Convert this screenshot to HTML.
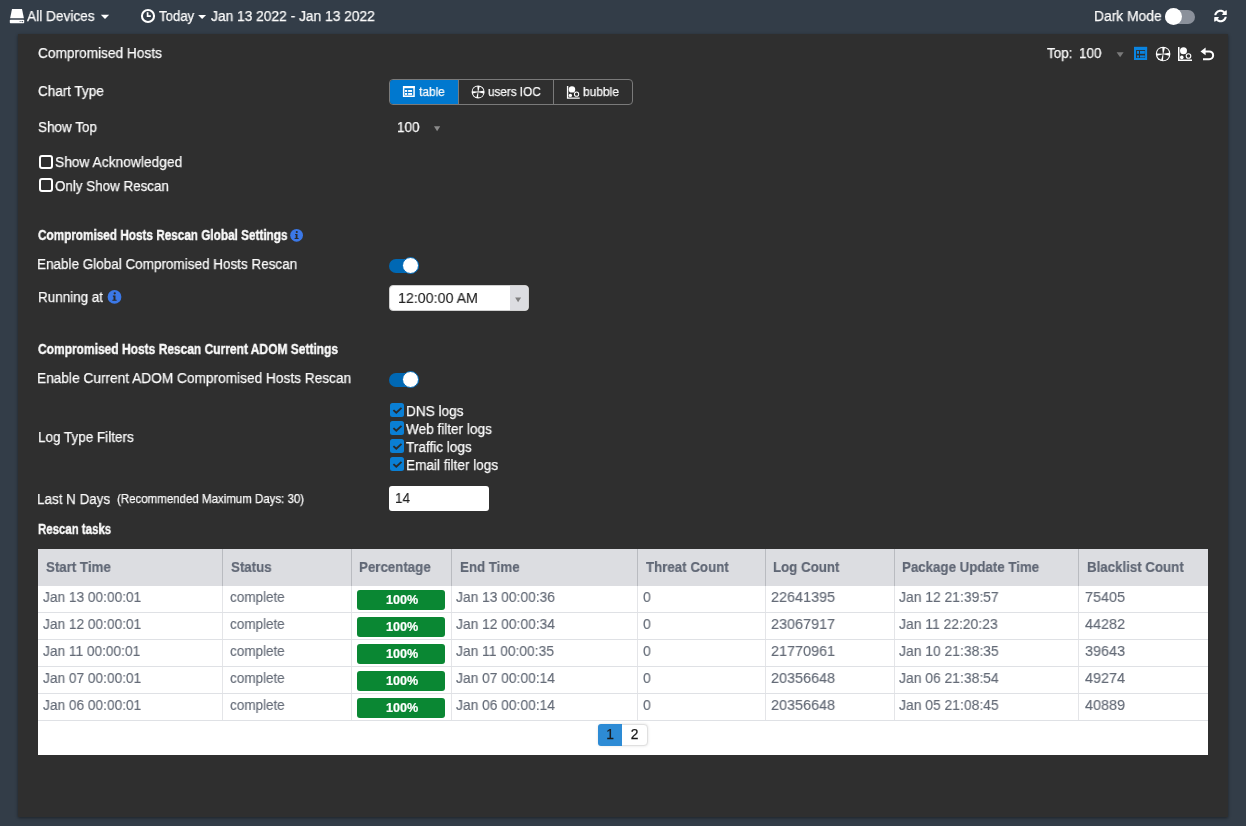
<!DOCTYPE html>
<html><head><meta charset="utf-8"><style>
html,body{margin:0;padding:0;width:1246px;height:826px;overflow:hidden;background:#333d48;font-family:"Liberation Sans",sans-serif;}
.t{position:absolute;white-space:nowrap;line-height:1;will-change:transform;}
</style></head><body>
<div style="position:absolute;left:18px;top:34px;width:1210px;height:783px;background:#2f2f2f;box-shadow:0 1px 3px rgba(0,0,0,.45);"></div>
<div class="t" style="left:27.3px;top:9.25px;font-size:14.826px;font-weight:400;color:#fafafa;letter-spacing:0px;transform:scaleX(0.9241);transform-origin:0 0;-webkit-text-stroke:0.25px #fafafa;">All Devices</div>
<div class="t" style="left:159px;top:9.25px;font-size:14.826px;font-weight:400;color:#fafafa;letter-spacing:0px;transform:scaleX(0.8904);transform-origin:0 0;-webkit-text-stroke:0.25px #fafafa;">Today</div>
<div class="t" style="left:211px;top:9.25px;font-size:14.826px;font-weight:400;color:#fafafa;letter-spacing:0px;transform:scaleX(0.9295);transform-origin:0 0;-webkit-text-stroke:0.25px #fafafa;">Jan 13 2022 - Jan 13 2022</div>
<div class="t" style="left:1093.7px;top:9.25px;font-size:14.826px;font-weight:400;color:#fafafa;letter-spacing:0px;transform:scaleX(0.9335);transform-origin:0 0;-webkit-text-stroke:0.25px #fafafa;">Dark Mode</div>
<div class="t" style="left:38px;top:45.85px;font-size:14.826px;font-weight:400;color:#fafafa;letter-spacing:0px;transform:scaleX(0.9234);transform-origin:0 0;-webkit-text-stroke:0.25px #fafafa;">Compromised Hosts</div>
<div class="t" style="left:1046.5px;top:46.25px;font-size:14.826px;font-weight:400;color:#fafafa;letter-spacing:0px;transform:scaleX(0.9038);transform-origin:0 0;-webkit-text-stroke:0.25px #fafafa;">Top:</div>
<div class="t" style="left:1079.3px;top:46.25px;font-size:14.826px;font-weight:400;color:#fafafa;letter-spacing:0px;transform:scaleX(0.9072);transform-origin:0 0;-webkit-text-stroke:0.25px #fafafa;">100</div>
<div class="t" style="left:38px;top:84.05px;font-size:14.826px;font-weight:400;color:#fafafa;letter-spacing:0px;transform:scaleX(0.9106);transform-origin:0 0;-webkit-text-stroke:0.25px #fafafa;">Chart Type</div>
<div class="t" style="left:38px;top:120.05px;font-size:14.826px;font-weight:400;color:#fafafa;letter-spacing:0px;transform:scaleX(0.9106);transform-origin:0 0;-webkit-text-stroke:0.25px #fafafa;">Show Top</div>
<div class="t" style="left:396.8px;top:120.25px;font-size:14.826px;font-weight:400;color:#fafafa;letter-spacing:0px;transform:scaleX(0.9106);transform-origin:0 0;-webkit-text-stroke:0.25px #fafafa;">100</div>
<div class="t" style="left:55.2px;top:155.05px;font-size:14.826px;font-weight:400;color:#fafafa;letter-spacing:0px;transform:scaleX(0.9308);transform-origin:0 0;-webkit-text-stroke:0.25px #fafafa;">Show Acknowledged</div>
<div class="t" style="left:55.2px;top:178.75px;font-size:14.826px;font-weight:400;color:#fafafa;letter-spacing:0px;transform:scaleX(0.9038);transform-origin:0 0;-webkit-text-stroke:0.25px #fafafa;">Only Show Rescan</div>
<div class="t" style="left:38px;top:228.04px;font-size:14.244px;font-weight:700;color:#fafafa;letter-spacing:0px;transform:scaleX(0.8256);transform-origin:0 0;-webkit-text-stroke:0.4px #fafafa;">Compromised Hosts Rescan Global Settings</div>
<div class="t" style="left:37.3px;top:257.45px;font-size:14.826px;font-weight:400;color:#fafafa;letter-spacing:0px;transform:scaleX(0.9106);transform-origin:0 0;-webkit-text-stroke:0.25px #fafafa;">Enable Global Compromised Hosts Rescan</div>
<div class="t" style="left:37.9px;top:289.85px;font-size:14.826px;font-weight:400;color:#fafafa;letter-spacing:0px;transform:scaleX(0.9072);transform-origin:0 0;-webkit-text-stroke:0.25px #fafafa;">Running at</div>
<div class="t" style="left:38px;top:341.94px;font-size:14.244px;font-weight:700;color:#fafafa;letter-spacing:0px;transform:scaleX(0.8424);transform-origin:0 0;-webkit-text-stroke:0.4px #fafafa;">Compromised Hosts Rescan Current ADOM Settings</div>
<div class="t" style="left:37.3px;top:371.25px;font-size:14.826px;font-weight:400;color:#fafafa;letter-spacing:0px;transform:scaleX(0.9241);transform-origin:0 0;-webkit-text-stroke:0.25px #fafafa;">Enable Current ADOM Compromised Hosts Rescan</div>
<div class="t" style="left:38px;top:430.25px;font-size:14.826px;font-weight:400;color:#fafafa;letter-spacing:0px;transform:scaleX(0.9106);transform-origin:0 0;-webkit-text-stroke:0.25px #fafafa;">Log Type Filters</div>
<div class="t" style="left:405.8px;top:403.95px;font-size:14.826px;font-weight:400;color:#fafafa;letter-spacing:0px;transform:scaleX(0.9173);transform-origin:0 0;-webkit-text-stroke:0.25px #fafafa;">DNS logs</div>
<div class="t" style="left:405.8px;top:421.95px;font-size:14.826px;font-weight:400;color:#fafafa;letter-spacing:0px;transform:scaleX(0.9173);transform-origin:0 0;-webkit-text-stroke:0.25px #fafafa;">Web filter logs</div>
<div class="t" style="left:405.8px;top:439.95px;font-size:14.826px;font-weight:400;color:#fafafa;letter-spacing:0px;transform:scaleX(0.9173);transform-origin:0 0;-webkit-text-stroke:0.25px #fafafa;">Traffic logs</div>
<div class="t" style="left:405.8px;top:457.95px;font-size:14.826px;font-weight:400;color:#fafafa;letter-spacing:0px;transform:scaleX(0.9173);transform-origin:0 0;-webkit-text-stroke:0.25px #fafafa;">Email filter logs</div>
<div class="t" style="left:37.2px;top:491.65px;font-size:14.826px;font-weight:400;color:#fafafa;letter-spacing:0px;transform:scaleX(0.9072);transform-origin:0 0;-webkit-text-stroke:0.25px #fafafa;">Last N Days</div>
<div class="t" style="left:117.3px;top:492.97px;font-size:12.791px;font-weight:400;color:#fafafa;letter-spacing:0px;transform:scaleX(0.8991);transform-origin:0 0;-webkit-text-stroke:0.25px #fafafa;">(Recommended Maximum Days: 30)</div>
<div class="t" style="left:38px;top:522.44px;font-size:14.244px;font-weight:700;color:#fafafa;letter-spacing:0px;transform:scaleX(0.8038);transform-origin:0 0;-webkit-text-stroke:0.4px #fafafa;">Rescan tasks</div>
<div style="position:absolute;left:38px;top:549px;width:1170px;height:206px;background:#fff;"></div>
<div style="position:absolute;left:38px;top:549px;width:1170px;height:36.5px;background:#dcdde1;"></div>
<div class="t" style="left:46px;top:560.25px;font-size:14.826px;font-weight:700;color:#606775;letter-spacing:0px;transform:scaleX(0.8971);transform-origin:0 0;-webkit-text-stroke:0.2px #606775;">Start Time</div>
<div class="t" style="left:231.0px;top:560.25px;font-size:14.826px;font-weight:700;color:#606775;letter-spacing:0px;transform:scaleX(0.8971);transform-origin:0 0;-webkit-text-stroke:0.2px #606775;">Status</div>
<div class="t" style="left:358.5px;top:560.25px;font-size:14.826px;font-weight:700;color:#606775;letter-spacing:0px;transform:scaleX(0.8971);transform-origin:0 0;-webkit-text-stroke:0.2px #606775;">Percentage</div>
<div class="t" style="left:459.8px;top:560.25px;font-size:14.826px;font-weight:700;color:#606775;letter-spacing:0px;transform:scaleX(0.8971);transform-origin:0 0;-webkit-text-stroke:0.2px #606775;">End Time</div>
<div class="t" style="left:646.0px;top:560.25px;font-size:14.826px;font-weight:700;color:#606775;letter-spacing:0px;transform:scaleX(0.8971);transform-origin:0 0;-webkit-text-stroke:0.2px #606775;">Threat Count</div>
<div class="t" style="left:773px;top:560.25px;font-size:14.826px;font-weight:700;color:#606775;letter-spacing:0px;transform:scaleX(0.8971);transform-origin:0 0;-webkit-text-stroke:0.2px #606775;">Log Count</div>
<div class="t" style="left:902px;top:560.25px;font-size:14.826px;font-weight:700;color:#606775;letter-spacing:0px;transform:scaleX(0.8971);transform-origin:0 0;-webkit-text-stroke:0.2px #606775;">Package Update Time</div>
<div class="t" style="left:1087.1px;top:560.25px;font-size:14.826px;font-weight:700;color:#606775;letter-spacing:0px;transform:scaleX(0.8971);transform-origin:0 0;-webkit-text-stroke:0.2px #606775;">Blacklist Count</div>
<div style="position:absolute;left:222.0px;top:549px;width:1px;height:36.5px;background:#b9bbc0;"></div>
<div style="position:absolute;left:222.0px;top:585.5px;width:1px;height:134.5px;background:#e4e5e8;"></div>
<div style="position:absolute;left:350.5px;top:549px;width:1px;height:36.5px;background:#b9bbc0;"></div>
<div style="position:absolute;left:350.5px;top:585.5px;width:1px;height:134.5px;background:#e4e5e8;"></div>
<div style="position:absolute;left:450.5px;top:549px;width:1px;height:36.5px;background:#b9bbc0;"></div>
<div style="position:absolute;left:450.5px;top:585.5px;width:1px;height:134.5px;background:#e4e5e8;"></div>
<div style="position:absolute;left:636.5px;top:549px;width:1px;height:36.5px;background:#b9bbc0;"></div>
<div style="position:absolute;left:636.5px;top:585.5px;width:1px;height:134.5px;background:#e4e5e8;"></div>
<div style="position:absolute;left:764.5px;top:549px;width:1px;height:36.5px;background:#b9bbc0;"></div>
<div style="position:absolute;left:764.5px;top:585.5px;width:1px;height:134.5px;background:#e4e5e8;"></div>
<div style="position:absolute;left:893.5px;top:549px;width:1px;height:36.5px;background:#b9bbc0;"></div>
<div style="position:absolute;left:893.5px;top:585.5px;width:1px;height:134.5px;background:#e4e5e8;"></div>
<div style="position:absolute;left:1077.5px;top:549px;width:1px;height:36.5px;background:#b9bbc0;"></div>
<div style="position:absolute;left:1077.5px;top:585.5px;width:1px;height:134.5px;background:#e4e5e8;"></div>
<div style="position:absolute;left:38px;top:612px;width:1170px;height:1px;background:#dfe1e5;"></div>
<div class="t" style="left:43px;top:590.25px;font-size:14.826px;font-weight:400;color:#646b77;letter-spacing:0px;transform:scaleX(0.9241);transform-origin:0 0;-webkit-text-stroke:0.15px #646b77;">Jan 13 00:00:01</div>
<div class="t" style="left:229.9px;top:590.25px;font-size:14.826px;font-weight:400;color:#646b77;letter-spacing:0px;transform:scaleX(0.9106);transform-origin:0 0;-webkit-text-stroke:0.15px #646b77;">complete</div>
<div style="position:absolute;left:357px;top:590px;width:88px;height:20px;background:#0a8733;border-radius:3px;"></div>
<div class="t" style="left:385.6px;top:594.02px;font-size:12.500px;font-weight:700;color:#fff;letter-spacing:0px;transform:scaleX(1.0080);transform-origin:0 0;-webkit-text-stroke:0.2px #fff;">100%</div>
<div class="t" style="left:456.3px;top:590.25px;font-size:14.826px;font-weight:400;color:#646b77;letter-spacing:0px;transform:scaleX(0.9308);transform-origin:0 0;-webkit-text-stroke:0.15px #646b77;">Jan 13 00:00:36</div>
<div class="t" style="left:643px;top:590.25px;font-size:14.826px;font-weight:400;color:#646b77;letter-spacing:0px;transform:scaleX(0.9443);transform-origin:0 0;-webkit-text-stroke:0.15px #646b77;">0</div>
<div class="t" style="left:770.8px;top:590.25px;font-size:14.826px;font-weight:400;color:#646b77;letter-spacing:0px;transform:scaleX(0.9713);transform-origin:0 0;-webkit-text-stroke:0.15px #646b77;">22641395</div>
<div class="t" style="left:898.5px;top:590.25px;font-size:14.826px;font-weight:400;color:#646b77;letter-spacing:0px;transform:scaleX(0.9376);transform-origin:0 0;-webkit-text-stroke:0.15px #646b77;">Jan 12 21:39:57</div>
<div class="t" style="left:1085.4px;top:590.25px;font-size:14.826px;font-weight:400;color:#646b77;letter-spacing:0px;transform:scaleX(0.9713);transform-origin:0 0;-webkit-text-stroke:0.15px #646b77;">75405</div>
<div style="position:absolute;left:38px;top:639px;width:1170px;height:1px;background:#dfe1e5;"></div>
<div class="t" style="left:43px;top:617.25px;font-size:14.826px;font-weight:400;color:#646b77;letter-spacing:0px;transform:scaleX(0.9241);transform-origin:0 0;-webkit-text-stroke:0.15px #646b77;">Jan 12 00:00:01</div>
<div class="t" style="left:229.9px;top:617.25px;font-size:14.826px;font-weight:400;color:#646b77;letter-spacing:0px;transform:scaleX(0.9106);transform-origin:0 0;-webkit-text-stroke:0.15px #646b77;">complete</div>
<div style="position:absolute;left:357px;top:617px;width:88px;height:20px;background:#0a8733;border-radius:3px;"></div>
<div class="t" style="left:385.6px;top:621.02px;font-size:12.500px;font-weight:700;color:#fff;letter-spacing:0px;transform:scaleX(1.0080);transform-origin:0 0;-webkit-text-stroke:0.2px #fff;">100%</div>
<div class="t" style="left:456.3px;top:617.25px;font-size:14.826px;font-weight:400;color:#646b77;letter-spacing:0px;transform:scaleX(0.9308);transform-origin:0 0;-webkit-text-stroke:0.15px #646b77;">Jan 12 00:00:34</div>
<div class="t" style="left:643px;top:617.25px;font-size:14.826px;font-weight:400;color:#646b77;letter-spacing:0px;transform:scaleX(0.9443);transform-origin:0 0;-webkit-text-stroke:0.15px #646b77;">0</div>
<div class="t" style="left:770.8px;top:617.25px;font-size:14.826px;font-weight:400;color:#646b77;letter-spacing:0px;transform:scaleX(0.9713);transform-origin:0 0;-webkit-text-stroke:0.15px #646b77;">23067917</div>
<div class="t" style="left:898.5px;top:617.25px;font-size:14.826px;font-weight:400;color:#646b77;letter-spacing:0px;transform:scaleX(0.9376);transform-origin:0 0;-webkit-text-stroke:0.15px #646b77;">Jan 11 22:20:23</div>
<div class="t" style="left:1085.4px;top:617.25px;font-size:14.826px;font-weight:400;color:#646b77;letter-spacing:0px;transform:scaleX(0.9713);transform-origin:0 0;-webkit-text-stroke:0.15px #646b77;">44282</div>
<div style="position:absolute;left:38px;top:666px;width:1170px;height:1px;background:#dfe1e5;"></div>
<div class="t" style="left:43px;top:644.25px;font-size:14.826px;font-weight:400;color:#646b77;letter-spacing:0px;transform:scaleX(0.9241);transform-origin:0 0;-webkit-text-stroke:0.15px #646b77;">Jan 11 00:00:01</div>
<div class="t" style="left:229.9px;top:644.25px;font-size:14.826px;font-weight:400;color:#646b77;letter-spacing:0px;transform:scaleX(0.9106);transform-origin:0 0;-webkit-text-stroke:0.15px #646b77;">complete</div>
<div style="position:absolute;left:357px;top:644px;width:88px;height:20px;background:#0a8733;border-radius:3px;"></div>
<div class="t" style="left:385.6px;top:648.02px;font-size:12.500px;font-weight:700;color:#fff;letter-spacing:0px;transform:scaleX(1.0080);transform-origin:0 0;-webkit-text-stroke:0.2px #fff;">100%</div>
<div class="t" style="left:456.3px;top:644.25px;font-size:14.826px;font-weight:400;color:#646b77;letter-spacing:0px;transform:scaleX(0.9308);transform-origin:0 0;-webkit-text-stroke:0.15px #646b77;">Jan 11 00:00:35</div>
<div class="t" style="left:643px;top:644.25px;font-size:14.826px;font-weight:400;color:#646b77;letter-spacing:0px;transform:scaleX(0.9443);transform-origin:0 0;-webkit-text-stroke:0.15px #646b77;">0</div>
<div class="t" style="left:770.8px;top:644.25px;font-size:14.826px;font-weight:400;color:#646b77;letter-spacing:0px;transform:scaleX(0.9713);transform-origin:0 0;-webkit-text-stroke:0.15px #646b77;">21770961</div>
<div class="t" style="left:898.5px;top:644.25px;font-size:14.826px;font-weight:400;color:#646b77;letter-spacing:0px;transform:scaleX(0.9376);transform-origin:0 0;-webkit-text-stroke:0.15px #646b77;">Jan 10 21:38:35</div>
<div class="t" style="left:1085.4px;top:644.25px;font-size:14.826px;font-weight:400;color:#646b77;letter-spacing:0px;transform:scaleX(0.9713);transform-origin:0 0;-webkit-text-stroke:0.15px #646b77;">39643</div>
<div style="position:absolute;left:38px;top:693px;width:1170px;height:1px;background:#dfe1e5;"></div>
<div class="t" style="left:43px;top:671.25px;font-size:14.826px;font-weight:400;color:#646b77;letter-spacing:0px;transform:scaleX(0.9241);transform-origin:0 0;-webkit-text-stroke:0.15px #646b77;">Jan 07 00:00:01</div>
<div class="t" style="left:229.9px;top:671.25px;font-size:14.826px;font-weight:400;color:#646b77;letter-spacing:0px;transform:scaleX(0.9106);transform-origin:0 0;-webkit-text-stroke:0.15px #646b77;">complete</div>
<div style="position:absolute;left:357px;top:671px;width:88px;height:20px;background:#0a8733;border-radius:3px;"></div>
<div class="t" style="left:385.6px;top:675.02px;font-size:12.500px;font-weight:700;color:#fff;letter-spacing:0px;transform:scaleX(1.0080);transform-origin:0 0;-webkit-text-stroke:0.2px #fff;">100%</div>
<div class="t" style="left:456.3px;top:671.25px;font-size:14.826px;font-weight:400;color:#646b77;letter-spacing:0px;transform:scaleX(0.9308);transform-origin:0 0;-webkit-text-stroke:0.15px #646b77;">Jan 07 00:00:14</div>
<div class="t" style="left:643px;top:671.25px;font-size:14.826px;font-weight:400;color:#646b77;letter-spacing:0px;transform:scaleX(0.9443);transform-origin:0 0;-webkit-text-stroke:0.15px #646b77;">0</div>
<div class="t" style="left:770.8px;top:671.25px;font-size:14.826px;font-weight:400;color:#646b77;letter-spacing:0px;transform:scaleX(0.9713);transform-origin:0 0;-webkit-text-stroke:0.15px #646b77;">20356648</div>
<div class="t" style="left:898.5px;top:671.25px;font-size:14.826px;font-weight:400;color:#646b77;letter-spacing:0px;transform:scaleX(0.9376);transform-origin:0 0;-webkit-text-stroke:0.15px #646b77;">Jan 06 21:38:54</div>
<div class="t" style="left:1085.4px;top:671.25px;font-size:14.826px;font-weight:400;color:#646b77;letter-spacing:0px;transform:scaleX(0.9713);transform-origin:0 0;-webkit-text-stroke:0.15px #646b77;">49274</div>
<div style="position:absolute;left:38px;top:720px;width:1170px;height:1px;background:#dfe1e5;"></div>
<div class="t" style="left:43px;top:698.25px;font-size:14.826px;font-weight:400;color:#646b77;letter-spacing:0px;transform:scaleX(0.9241);transform-origin:0 0;-webkit-text-stroke:0.15px #646b77;">Jan 06 00:00:01</div>
<div class="t" style="left:229.9px;top:698.25px;font-size:14.826px;font-weight:400;color:#646b77;letter-spacing:0px;transform:scaleX(0.9106);transform-origin:0 0;-webkit-text-stroke:0.15px #646b77;">complete</div>
<div style="position:absolute;left:357px;top:698px;width:88px;height:20px;background:#0a8733;border-radius:3px;"></div>
<div class="t" style="left:385.6px;top:702.02px;font-size:12.500px;font-weight:700;color:#fff;letter-spacing:0px;transform:scaleX(1.0080);transform-origin:0 0;-webkit-text-stroke:0.2px #fff;">100%</div>
<div class="t" style="left:456.3px;top:698.25px;font-size:14.826px;font-weight:400;color:#646b77;letter-spacing:0px;transform:scaleX(0.9308);transform-origin:0 0;-webkit-text-stroke:0.15px #646b77;">Jan 06 00:00:14</div>
<div class="t" style="left:643px;top:698.25px;font-size:14.826px;font-weight:400;color:#646b77;letter-spacing:0px;transform:scaleX(0.9443);transform-origin:0 0;-webkit-text-stroke:0.15px #646b77;">0</div>
<div class="t" style="left:770.8px;top:698.25px;font-size:14.826px;font-weight:400;color:#646b77;letter-spacing:0px;transform:scaleX(0.9713);transform-origin:0 0;-webkit-text-stroke:0.15px #646b77;">20356648</div>
<div class="t" style="left:898.5px;top:698.25px;font-size:14.826px;font-weight:400;color:#646b77;letter-spacing:0px;transform:scaleX(0.9376);transform-origin:0 0;-webkit-text-stroke:0.15px #646b77;">Jan 05 21:08:45</div>
<div class="t" style="left:1085.4px;top:698.25px;font-size:14.826px;font-weight:400;color:#646b77;letter-spacing:0px;transform:scaleX(0.9713);transform-origin:0 0;-webkit-text-stroke:0.15px #646b77;">40889</div>
<div style="position:absolute;left:598px;top:723.5px;width:49.5px;height:22.6px;background:#fff;border:1px solid #e0e0e0;border-radius:4px;box-sizing:border-box;box-shadow:0 0 3px rgba(0,0,0,.12);"></div>
<div style="position:absolute;left:598px;top:723.5px;width:24px;height:22.6px;background:#2d8bd5;border-radius:3px 0 0 3px;"></div>
<div class="t" style="left:598.3px;top:728.12px;font-size:13.800px;font-weight:400;color:#1a1a1a;letter-spacing:0px;-webkit-text-stroke:0.25px #1a1a1a;width:24px;text-align:center;">1</div>
<div class="t" style="left:622px;top:728.12px;font-size:13.800px;font-weight:400;color:#1a1a1a;letter-spacing:0px;-webkit-text-stroke:0.25px #1a1a1a;width:25px;text-align:center;">2</div>
<svg style="position:absolute;left:0px;top:0px;overflow:visible" width="40" height="34" viewBox="0 0 40 34"><path d="M12 9 H22 L23.9 18.2 H10.1 Z" fill="#fff"/><rect x="9.8" y="19.8" width="14.4" height="3.4" rx="0.7" fill="#fff"/><rect x="19.5" y="21.1" width="2.2" height="0.9" fill="#8a9099"/><circle cx="22.6" cy="21.55" r="0.6" fill="#333d48"/></svg>
<svg style="position:absolute;left:95px;top:8px;overflow:visible" width="16" height="16" viewBox="95 8 16 16"><path d="M100.8 14.8 L109.2 14.8 L105.0 19.1 Z" fill="#fff"/></svg>
<svg style="position:absolute;left:135px;top:4px;overflow:visible" width="24" height="24" viewBox="135 4 24 24"><circle cx="148" cy="16" r="6.05" fill="none" stroke="#fff" stroke-width="2.1"/><path d="M147.6 12.2 V16.2 H150.8" fill="none" stroke="#fff" stroke-width="1.7"/></svg>
<svg style="position:absolute;left:195px;top:8px;overflow:visible" width="16" height="16" viewBox="195 8 16 16"><path d="M198.1 14.9 L206.1 14.9 L202.1 19 Z" fill="#fff"/></svg>
<div style="position:absolute;left:1165px;top:10px;width:30px;height:14px;background:#8b919b;border-radius:7px;"></div>
<div style="position:absolute;left:1165px;top:8.2px;width:17px;height:17px;background:#fff;border-radius:50%;"></div>
<svg style="position:absolute;left:1214px;top:10px;overflow:visible" width="13" height="12" viewBox="1214 10 13 12"><g transform="translate(1214,9.5) scale(0.0254)"><path fill="#fff" d="M370.72 133.28C339.458 104.008 298.888 87.962 255.848 88c-77.458.068-144.328 53.178-162.791 126.85-1.344 5.363-6.122 9.15-11.651 9.15H24.103c-7.498 0-13.194-6.807-11.807-14.176C33.933 94.924 134.813 8 256 8c66.448 0 126.791 26.136 171.315 68.685L463.03 40.97C478.149 25.851 504 36.559 504 57.941V192c0 13.255-10.745 24-24 24H345.941c-21.382 0-32.090-25.851-16.971-40.971l41.75-41.749zM32 296h134.059c21.382 0 32.090 25.851 16.971 40.971l-41.750 41.750c31.262 29.273 71.835 45.319 114.876 45.280 77.418-.07 144.315-53.144 162.787-126.849 1.344-5.363 6.122-9.150 11.651-9.150h57.304c7.498 0 13.194 6.807 11.807 14.176C478.067 417.076 377.187 504 256 504c-66.448 0-126.791-26.136-171.315-68.685L48.970 471.030C33.851 486.149 8 475.441 8 454.059V320c0-13.255 10.745-24 24-24z"/></g></svg>
<svg style="position:absolute;left:1112px;top:48px;overflow:visible" width="16" height="12" viewBox="1112 48 16 12"><path d="M1116.6 52.3 L1123.6 52.3 L1120.1 57.3 Z" fill="#7a7a7a"/></svg>
<svg style="position:absolute;left:1130px;top:44px;overflow:visible" width="20" height="20" viewBox="1130 44 20 20"><rect x="1135" y="47.9" width="11.1" height="11.1" fill="none" stroke="#0a84e0" stroke-width="2"/><rect x="1134" y="46.9" width="13.1" height="3.2" fill="#0a84e0"/><rect x="1136.9" y="51" width="2.1" height="2.8" fill="#0a84e0"/><rect x="1136.9" y="55.4" width="2.1" height="2.1" fill="#0a84e0"/><rect x="1140" y="51" width="4.8" height="2.8" fill="#0a84e0"/><rect x="1140" y="55.4" width="4.8" height="2.1" fill="#0a84e0"/></svg>
<svg style="position:absolute;left:1150px;top:44px;overflow:visible" width="24" height="20" viewBox="1150 44 24 20"><circle cx="1163.1" cy="54" r="7.3" fill="#fff"/><path d="M1162.77 53.68 L1157.00 53.38 A5.77 5.77 0 0 1 1162.26 47.93 Z" fill="#2f2f2f"/><path d="M1163.44 53.68 L1164.84 48.08 A5.77 5.77 0 0 1 1169.12 52.68 Z" fill="#2f2f2f"/><path d="M1163.38 54.37 L1169.00 55.67 A5.77 5.77 0 0 1 1163.08 60.13 Z" fill="#2f2f2f"/><path d="M1162.77 54.32 L1161.18 59.87 A5.77 5.77 0 0 1 1157.17 55.72 Z" fill="#2f2f2f"/></svg>
<svg style="position:absolute;left:1175px;top:44px;overflow:visible" width="20" height="20" viewBox="1175 44 20 20"><path d="M1178.75 47 V60.25 H1192" fill="none" stroke="#fff" stroke-width="1.5"/><circle cx="1183.5" cy="50.8" r="3.5" fill="#fff"/><circle cx="1181.8" cy="57.4" r="1.8" fill="#fff"/><circle cx="1188.5" cy="56" r="2.3" fill="none" stroke="#fff" stroke-width="1.1"/></svg>
<svg style="position:absolute;left:1198px;top:44px;overflow:visible" width="20" height="20" viewBox="1198 44 20 20"><path d="M1204.6 51.4 H1209.2 A3.95 3.95 0 0 1 1209.2 59.3 H1203" fill="none" stroke="#fff" stroke-width="2"/><path d="M1200.5 51.4 L1205.6 47.6 L1205.6 55.2 Z" fill="#fff"/></svg>
<div style="position:absolute;left:389px;top:79px;width:243.5px;height:25.5px;border:1px solid #7a7a7a;border-radius:4px;box-sizing:border-box;overflow:hidden;"><div style="position:absolute;left:0;top:0;width:68px;height:100%;background:#0078cf;"></div><div style="position:absolute;left:68px;top:0;width:1px;height:100%;background:#7a7a7a;"></div><div style="position:absolute;left:163px;top:0;width:1px;height:100%;background:#7a7a7a;"></div></div>
<svg style="position:absolute;left:400px;top:83px;overflow:visible" width="18" height="18" viewBox="400 83 18 18"><rect x="403.65" y="86.75" width="10.4" height="9.5" fill="none" stroke="#fff" stroke-width="1.5"/><rect x="403" y="86" width="11.8" height="2.2" fill="#fff"/><rect x="405" y="90" width="2.2" height="1.9" fill="#fff"/><rect x="405" y="93" width="2.2" height="1.9" fill="#fff"/><rect x="408.1" y="90" width="4" height="1.9" fill="#fff"/><rect x="408.1" y="93" width="4" height="1.9" fill="#fff"/></svg>
<div class="t" style="left:418.7px;top:85.42px;font-size:13.081px;font-weight:400;color:#fafafa;letter-spacing:0px;transform:scaleX(0.9097);transform-origin:0 0;-webkit-text-stroke:0.25px #fafafa;">table</div>
<svg style="position:absolute;left:468px;top:82px;overflow:visible" width="20" height="20" viewBox="468 82 20 20"><circle cx="478.1" cy="91.9" r="6.5" fill="#fff"/><path d="M477.80 91.61 L472.67 91.34 A5.14 5.14 0 0 1 477.36 86.49 Z" fill="#2f2f2f"/><path d="M478.40 91.62 L479.64 86.63 A5.14 5.14 0 0 1 483.46 90.73 Z" fill="#2f2f2f"/><path d="M478.35 92.23 L483.36 93.39 A5.14 5.14 0 0 1 478.08 97.36 Z" fill="#2f2f2f"/><path d="M477.80 92.19 L476.39 97.13 A5.14 5.14 0 0 1 472.82 93.43 Z" fill="#2f2f2f"/></svg>
<div class="t" style="left:487.7px;top:85.42px;font-size:13.081px;font-weight:400;color:#fafafa;letter-spacing:0px;transform:scaleX(0.8944);transform-origin:0 0;-webkit-text-stroke:0.25px #fafafa;">users IOC</div>
<svg style="position:absolute;left:564px;top:83px;overflow:visible" width="20" height="20" viewBox="564 83 20 20"><path d="M567.59 85.9 V98.09 H579.78" fill="none" stroke="#fff" stroke-width="1.3800000000000001"/><circle cx="571.9599999999999" cy="89.396" r="3.22" fill="#fff"/><circle cx="570.396" cy="95.468" r="1.6560000000000001" fill="#fff"/><circle cx="576.56" cy="94.18" r="2.116" fill="none" stroke="#fff" stroke-width="1.0120000000000002"/></svg>
<div class="t" style="left:583px;top:85.42px;font-size:13.081px;font-weight:400;color:#fafafa;letter-spacing:0px;transform:scaleX(0.9173);transform-origin:0 0;-webkit-text-stroke:0.25px #fafafa;">bubble</div>
<svg style="position:absolute;left:430px;top:122px;overflow:visible" width="14" height="12" viewBox="430 122 14 12"><path d="M434 126.3 L440.2 126.3 L437.1 131.3 Z" fill="#8a8a8a"/></svg>
<div style="position:absolute;left:39.3px;top:155.4px;width:13.4px;height:13.4px;border:2px solid #fff;border-radius:3px;box-sizing:border-box;"></div>
<div style="position:absolute;left:39.3px;top:178.4px;width:13.4px;height:13.4px;border:2px solid #fff;border-radius:3px;box-sizing:border-box;"></div>
<svg style="position:absolute;left:286px;top:226px;overflow:visible" width="22" height="20" viewBox="286 226 22 20"><circle cx="296.6" cy="235.3" r="6.4" fill="#3b78e7"/><circle cx="296.8" cy="232.0" r="1.05" fill="#2a2a2a"/><path d="M295.1 234.10000000000002 H297.5 V237.9 H298.6 V238.9 H294.6 V237.9 H295.70000000000005 V235.10000000000002 H295.1 Z" fill="#2a2a2a"/></svg>
<svg style="position:absolute;left:104px;top:285px;overflow:visible" width="22" height="22" viewBox="104 285 22 22"><circle cx="114.5" cy="296.9" r="6.9" fill="#3b78e7"/><circle cx="114.715625" cy="293.34218749999997" r="1.13203125" fill="#2a2a2a"/><path d="M112.8828125 295.60625 H115.4703125 V299.703125 H116.65625 V300.78125 H112.34375 V299.703125 H113.5296875 V296.684375 H112.8828125 Z" fill="#2a2a2a"/></svg>
<div style="position:absolute;left:389px;top:258.9px;width:30px;height:14px;background:#0068b4;border-radius:7px;"></div>
<div style="position:absolute;left:401.6px;top:257.29999999999995px;width:17.2px;height:17.2px;background:#fff;border:1px solid #0068b4;border-radius:50%;box-sizing:border-box;"></div>
<div style="position:absolute;left:389px;top:372.9px;width:30px;height:14px;background:#0068b4;border-radius:7px;"></div>
<div style="position:absolute;left:401.6px;top:371.29999999999995px;width:17.2px;height:17.2px;background:#fff;border:1px solid #0068b4;border-radius:50%;box-sizing:border-box;"></div>
<div style="position:absolute;left:389px;top:285px;width:140px;height:26px;background:#fff;border:1px solid #d0d0d0;border-radius:4px;box-sizing:border-box;overflow:hidden;"></div>
<div style="position:absolute;left:510px;top:286px;width:18px;height:24px;background:#dcdde1;border-radius:0 3px 3px 0;"></div>
<svg style="position:absolute;left:512px;top:294px;overflow:visible" width="12" height="12" viewBox="512 294 12 12"><path d="M515.1 297.5 L521.1 297.5 L518.1 302.2 Z" fill="#808080"/></svg>
<div class="t" style="left:398.2px;top:291.15px;font-size:14.826px;font-weight:400;color:#222;letter-spacing:0px;transform:scaleX(0.9612);transform-origin:0 0;-webkit-text-stroke:0.1px #222;">12:00:00 AM</div>
<div style="position:absolute;left:390px;top:402.8px;width:14px;height:14.2px;background:#0a7fd4;border-radius:2.5px;"></div>
<svg style="position:absolute;left:390px;top:402.8px;overflow:visible" width="14" height="14" viewBox="390 402.8 14 14"><path d="M393.4 409.90000000000003 L396.3 412.5 L401.5 407.7" fill="none" stroke="#2a2a2a" stroke-width="1.9"/></svg>
<div style="position:absolute;left:390px;top:420.8px;width:14px;height:14.2px;background:#0a7fd4;border-radius:2.5px;"></div>
<svg style="position:absolute;left:390px;top:420.8px;overflow:visible" width="14" height="14" viewBox="390 420.8 14 14"><path d="M393.4 427.90000000000003 L396.3 430.5 L401.5 425.7" fill="none" stroke="#2a2a2a" stroke-width="1.9"/></svg>
<div style="position:absolute;left:390px;top:438.8px;width:14px;height:14.2px;background:#0a7fd4;border-radius:2.5px;"></div>
<svg style="position:absolute;left:390px;top:438.8px;overflow:visible" width="14" height="14" viewBox="390 438.8 14 14"><path d="M393.4 445.90000000000003 L396.3 448.5 L401.5 443.7" fill="none" stroke="#2a2a2a" stroke-width="1.9"/></svg>
<div style="position:absolute;left:390px;top:456.8px;width:14px;height:14.2px;background:#0a7fd4;border-radius:2.5px;"></div>
<svg style="position:absolute;left:390px;top:456.8px;overflow:visible" width="14" height="14" viewBox="390 456.8 14 14"><path d="M393.4 463.90000000000003 L396.3 466.5 L401.5 461.7" fill="none" stroke="#2a2a2a" stroke-width="1.9"/></svg>
<div style="position:absolute;left:389px;top:486px;width:100px;height:25px;background:#fff;border-radius:3px;"></div>
<div class="t" style="left:395px;top:491.15px;font-size:14.826px;font-weight:400;color:#222;letter-spacing:0px;transform:scaleX(0.9106);transform-origin:0 0;-webkit-text-stroke:0.1px #222;">14</div>
</body></html>
